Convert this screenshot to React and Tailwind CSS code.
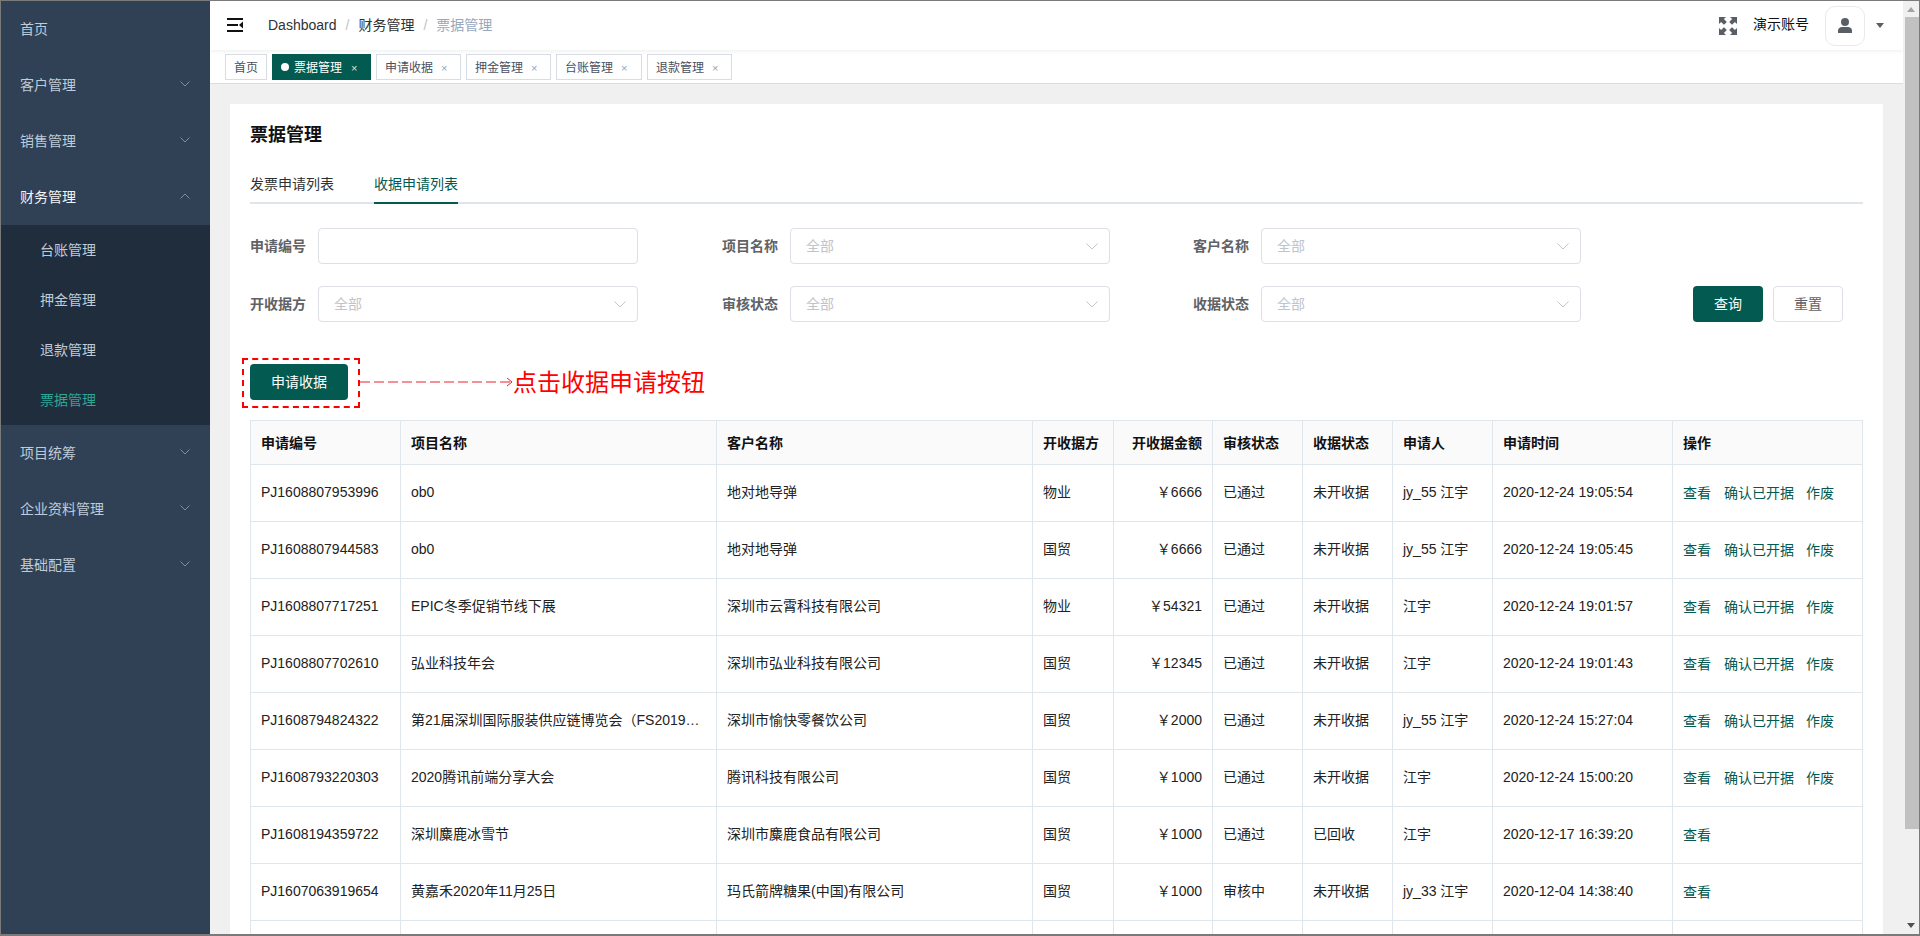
import React from "react";

const FONT = "font-['Liberation_Sans','Noto_Sans_CJK_SC',sans-serif]";

function Chev({ up, className }) {
  return (
    <svg width="10" height="6" viewBox="0 0 10 6" className={className} fill="none" stroke="currentColor" strokeWidth="1">
      <path d={up ? "M0.5 5.5L5 1L9.5 5.5" : "M0.5 0.5L5 5L9.5 0.5"} />
    </svg>
  );
}

function MenuItem({ label, arrow, active }) {
  return (
    <div className={`h-14 flex items-center justify-between pl-[19px] pr-[20px] text-sm ${active ? "text-[#f4f4f5]" : "text-[#bfcbd9]"}`}>
      <span>{label}</span>
      {arrow && <Chev up={arrow === "up"} className="text-[#7d8a99] -mt-[2px]" />}
    </div>
  );
}

function SubItem({ label, active }) {
  return (
    <div className={`h-[50px] flex items-center pl-[39px] text-sm ${active ? "text-[#2fa597]" : "text-[#bfcbd9]"}`}>{label}</div>
  );
}

function Sidebar() {
  return (
    <aside className="w-[209px] shrink-0 bg-[#304156]">
      <MenuItem label="首页" />
      <MenuItem label="客户管理" arrow="down" />
      <MenuItem label="销售管理" arrow="down" />
      <MenuItem label="财务管理" arrow="up" active />
      <div className="bg-[#1f2d3d]">
        <SubItem label="台账管理" />
        <SubItem label="押金管理" />
        <SubItem label="退款管理" />
        <SubItem label="票据管理" active />
      </div>
      <MenuItem label="项目统筹" arrow="down" />
      <MenuItem label="企业资料管理" arrow="down" />
      <MenuItem label="基础配置" arrow="down" />
    </aside>
  );
}

function Header() {
  return (
    <header className="h-[49px] shrink-0 bg-white flex items-center shadow-[0_1px_4px_rgba(0,21,41,0.08)] relative z-10">
      <svg width="16" height="14" viewBox="0 0 16 14" className="ml-[17px] mr-[25px] -mt-[2px]">
        <rect x="0" y="0" width="16" height="2" fill="#111" />
        <rect x="0" y="6" width="11" height="2" fill="#111" />
        <path d="M16 3.5V10.5L12 7Z" fill="#111" />
        <rect x="0" y="12" width="16" height="2" fill="#111" />
      </svg>
      <nav className="flex items-center text-sm -mt-[2px]">
        <span className="text-[#303133]">Dashboard</span>
        <span className="text-[#c0c4cc] mx-[9px]">/</span>
        <span className="text-[#303133]">财务管理</span>
        <span className="text-[#c0c4cc] mx-[9px]">/</span>
        <span className="text-[#97a8be]">票据管理</span>
      </nav>
      <div className="ml-auto flex items-center">
        <svg width="18" height="18" viewBox="0 0 18 18" fill="#5a5e66">
          <path d="M0 0H7L4.9 2.1L7.8 5L5 7.8L2.1 4.9L0 7Z" />
          <path d="M18 0H11L13.1 2.1L10.2 5L13 7.8L15.9 4.9L18 7Z" />
          <path d="M0 18H7L4.9 15.9L7.8 13L5 10.2L2.1 13.1L0 11Z" />
          <path d="M18 18H11L13.1 15.9L10.2 13L13 10.2L15.9 13.1L18 11Z" />
        </svg>
        <span className="ml-[16px] text-sm text-[#111] -mt-1">演示账号</span>
        <div className="ml-[16px] w-10 h-10 rounded-[10px] border border-[#eaeaea] flex items-center justify-center">
          <svg width="14" height="15" viewBox="0 0 14 15" fill="#5a5e66">
            <circle cx="7" cy="4" r="4" />
            <path d="M0 15V12.5C0 10.5 2 9 4 9H10C12 9 14 10.5 14 12.5V15Z" />
          </svg>
        </div>
        <svg width="8" height="5" viewBox="0 0 8 5" fill="#5a5e66" className="ml-[11px] mr-[19px]">
          <path d="M0 0H8L4 5Z" />
        </svg>
      </div>
    </header>
  );
}

function Tag({ label, active, home, wide }) {
  if (active) {
    return (
      <div className="h-[26px] w-[99px] bg-[#025a50] text-white text-xs flex items-center pl-[9px]">
        <span className="w-2 h-2 rounded-full bg-white mr-[5px]" />
        <span className="mt-[2px]">{label}</span>
        <span className="ml-[9px] text-[11px] text-[#d5e5e2] mt-[2px]">×</span>
      </div>
    );
  }
  return (
    <div className={`h-[26px] ${home ? "w-[42px] justify-center" : wide ? "w-[86px] pl-2" : "w-[85px] pl-2"} bg-white border border-[#d8dce5] text-[#495060] text-xs flex items-center`}>
      <span className="mt-[2px]">{label}</span>
      {!home && <span className="ml-[8px] text-[11px] text-[#9aa3b0] mt-[2px]">×</span>}
    </div>
  );
}

function TagsBar() {
  return (
    <div className="h-[34px] shrink-0 bg-white border-b border-[#d8dce5] flex items-start pt-1 pl-[15px] gap-[5px]">
      <Tag label="首页" home />
      <Tag label="票据管理" active />
      <Tag label="申请收据" />
      <Tag label="押金管理" />
      <Tag label="台账管理" wide />
      <Tag label="退款管理" />
    </div>
  );
}

function Select({ value }) {
  return (
    <div className="w-[320px] h-9 rounded border border-[#dcdfe6] bg-white flex items-center justify-between pl-[15px] pr-[11px]">
      <span className="text-sm text-[#c0c4cc]">{value}</span>
      {value && (
        <svg width="12" height="7" viewBox="0 0 12 7" fill="none" stroke="#c0c4cc" strokeWidth="1">
          <path d="M0.5 0.5L6 6L11.5 0.5" />
        </svg>
      )}
    </div>
  );
}

function Field({ label, value, noArrow, narrow }) {
  return (
    <div className={`${narrow ? "w-[471px]" : "w-[472px]"} shrink-0 flex items-center`}>
      <span className="w-[68px] text-sm font-bold text-[#606266]">{label}</span>
      <Select value={noArrow ? "" : value} />
    </div>
  );
}

const rows = [
  ["PJ1608807953996", "ob0", "地对地导弹", "物业", "￥6666", "已通过", "未开收据", "jy_55 江宇", "2020-12-24 19:05:54", 3],
  ["PJ1608807944583", "ob0", "地对地导弹", "国贸", "￥6666", "已通过", "未开收据", "jy_55 江宇", "2020-12-24 19:05:45", 3],
  ["PJ1608807717251", "EPIC冬季促销节线下展", "深圳市云霄科技有限公司", "物业", "￥54321", "已通过", "未开收据", "江宇", "2020-12-24 19:01:57", 3],
  ["PJ1608807702610", "弘业科技年会", "深圳市弘业科技有限公司", "国贸", "￥12345", "已通过", "未开收据", "江宇", "2020-12-24 19:01:43", 3],
  ["PJ1608794824322", "第21届深圳国际服装供应链博览会（FS2019…", "深圳市愉快零餐饮公司", "国贸", "￥2000", "已通过", "未开收据", "jy_55 江宇", "2020-12-24 15:27:04", 3],
  ["PJ1608793220303", "2020腾讯前端分享大会", "腾讯科技有限公司", "国贸", "￥1000", "已通过", "未开收据", "江宇", "2020-12-24 15:00:20", 3],
  ["PJ1608194359722", "深圳麋鹿冰雪节", "深圳市麋鹿食品有限公司", "国贸", "￥1000", "已通过", "已回收", "江宇", "2020-12-17 16:39:20", 1],
  ["PJ1607063919654", "黄嘉禾2020年11月25日", "玛氏箭牌糖果(中国)有限公司", "国贸", "￥1000", "审核中", "未开收据", "jy_33 江宇", "2020-12-04 14:38:40", 1],
  ["", "", "", "", "", "", "", "", "", 0],
];

const heads = ["申请编号", "项目名称", "客户名称", "开收据方", "开收据金额", "审核状态", "收据状态", "申请人", "申请时间", "操作"];
const widths = ["w-[150px]", "w-[316px]", "w-[316px]", "w-[81px]", "w-[99px]", "w-[90px]", "w-[90px]", "w-[100px]", "w-[180px]", "w-[190px]"];

function DataTable() {
  return (
    <table className="w-[1612px] table-fixed border-collapse text-sm text-[#222]">
      <colgroup>
        {widths.map((w, i) => <col key={i} className={w} />)}
      </colgroup>
      <thead>
        <tr className="h-[44px] bg-[#fafafa]">
          {heads.map((h, i) => (
            <th key={h} className={`border border-[#dfe6ec] px-[10px] font-bold text-[#111] ${i === 4 ? "text-right" : "text-left"}`}>{h}</th>
          ))}
        </tr>
      </thead>
      <tbody>
        {rows.map((r, i) => (
          <tr key={i} className="h-[57px]">
            {r.slice(0, 9).map((c, j) => (
              <td key={j} className={`border border-[#dfe6ec] px-[10px] pb-[2px] whitespace-nowrap ${j === 4 ? "text-right" : "text-left"}`}>{c}</td>
            ))}
            <td className="border border-[#dfe6ec] px-[10px] text-[#025a50] whitespace-nowrap">
              {r[9] > 0 && <span>查看</span>}
              {r[9] > 1 && <span className="ml-[13px]">确认已开据</span>}
              {r[9] > 1 && <span className="ml-[12px]">作废</span>}
            </td>
          </tr>
        ))}
      </tbody>
    </table>
  );
}

function Card() {
  return (
    <div className="bg-white px-5 pt-5 pb-5">
      <h1 className="mt-[1px] h-5 leading-5 text-lg font-bold text-[#111] mb-[19px]">票据管理</h1>
      <div className="h-10 flex border-b-2 border-[#dfe4ed] gap-10 text-sm">
        <div className="h-10 leading-10 text-[#303133]">发票申请列表</div>
        <div className="h-10 leading-10 text-[#025a50] border-b-2 border-[#025a50]">收据申请列表</div>
      </div>
      <div className="mt-6 flex">
        <Field label="申请编号" noArrow />
        <Field label="项目名称" value="全部" narrow />
        <Field label="客户名称" value="全部" />
      </div>
      <div className="mt-[22px] flex">
        <Field label="开收据方" value="全部" />
        <Field label="审核状态" value="全部" narrow />
        <Field label="收据状态" value="全部" />
        <button className="ml-[28px] w-[70px] h-9 rounded bg-[#025a50] text-white text-sm">查询</button>
        <button className="ml-[10px] w-[70px] h-9 rounded border border-[#dcdfe6] bg-white text-[#606266] text-sm">重置</button>
      </div>
      <div className="mt-[42px] h-9 flex items-center relative">
        <div className="absolute left-[-8px] top-[-6px] w-[118px] h-[50px] border-2 border-dashed border-[#f00]" />
        <button className="w-[98px] h-9 rounded bg-[#025a50] text-white text-sm">申请收据</button>
        <svg width="153" height="10" viewBox="0 0 153 10" className="ml-[12px] shrink-0" fill="none" stroke="#e8202f" strokeWidth="1">
          <path d="M0 5H151" strokeDasharray="10 4" />
          <path d="M147 1L152 5L147 9" />
        </svg>
        <span className="text-2xl text-[#f00] leading-none mt-[2px]">点击收据申请按钮</span>
      </div>
      <div className="mt-5">
        <DataTable />
      </div>
    </div>
  );
}

function Scrollbar() {
  return (
    <div className="w-[16px] shrink-0 bg-[#f0f0f0] flex flex-col items-center">
      <div className="h-4 flex items-center justify-center">
        <svg width="8" height="5" viewBox="0 0 8 5" fill="#a3a3a3"><path d="M0 5H8L4 0Z" /></svg>
      </div>
      <div className="w-[14px] h-[812px] bg-[#c1c1c1] ml-[1px]" />
      <div className="mt-auto h-4 flex items-center justify-center mb-[1px]">
        <svg width="8" height="5" viewBox="0 0 8 5" fill="#505050"><path d="M0 0H8L4 5Z" /></svg>
      </div>
    </div>
  );
}

export default function App() {
  return (
    <div className={`w-[1920px] h-[936px] overflow-hidden flex border border-b-2 border-[#7a7a7a] ${FONT}`}>
      <Sidebar />
      <main className="flex-1 min-w-0 flex flex-col bg-[#f0f0f0] overflow-hidden">
        <Header />
        <TagsBar />
        <div className="p-5">
          <Card />
        </div>
      </main>
      <Scrollbar />
    </div>
  );
}
